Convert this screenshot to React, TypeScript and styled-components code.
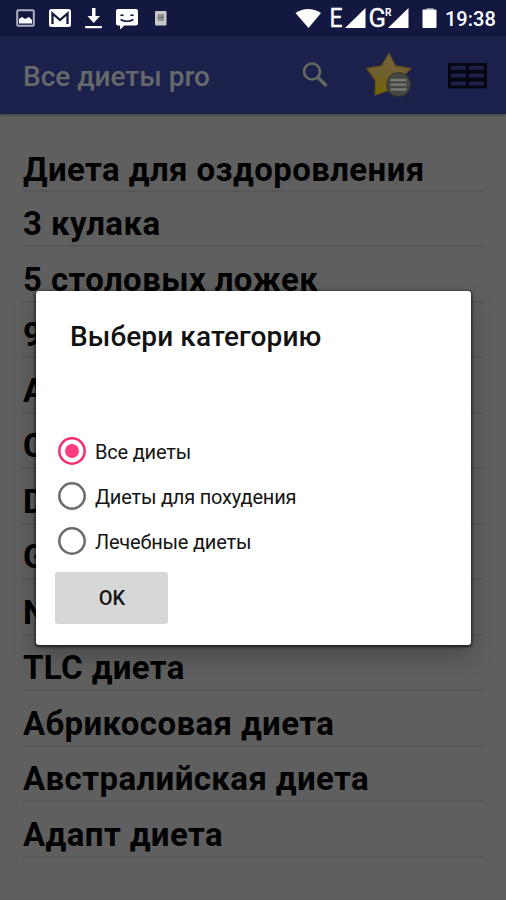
import React from 'react';
import styled, { createGlobalStyle } from 'styled-components';

const GlobalStyle = createGlobalStyle`
  * { box-sizing: border-box; }
  body { margin: 0; background: #5f5f5f; font-family: Roboto, "Liberation Sans", sans-serif; }
`;

const Screen = styled.div`
  position: relative;
  width: 506px;
  height: 900px;
  overflow: hidden;
  background: #5f5f5f;
`;

const StatusBar = styled.header`
  display: flex;
  justify-content: space-between;
  height: 36px;
  background: #131840;
  color: #fff;
`;

const StatusIcons = styled.svg`
  display: block;
  height: 36px;
`;

const StatusRight = styled.div`
  display: flex;
`;

const Clock = styled.span`
  width: 61px;
  font-size: 20px;
  font-weight: 500;
  line-height: 38px;
`;

const Toolbar = styled.div`
  display: flex;
  align-items: center;
  height: 78px;
  padding-left: 23px;
  background: #1b214b;
  box-shadow: 0 1px 3px rgba(0, 0, 0, 0.35);
`;

const AppTitle = styled.h1`
  flex: 1;
  margin: 0;
  padding-top: 3px;
  color: #66696b;
  font-size: 28px;
  font-weight: 500;
  line-height: 78px;
  white-space: nowrap;
`;

const ToolbarIcons = styled.svg`
  display: block;
  flex: none;
`;

const DietList = styled.ul`
  margin: 0;
  padding: 22px 22px 0 23px;
  list-style: none;
`;

const DietRow = styled.li<{ $shift?: number }>`
  height: 55.5px;
  border-bottom: 2px solid #575757;
  color: #020202;
  font-size: 33px;
  font-weight: 700;
  letter-spacing: 0.4px;
  line-height: 55.5px;
  padding-top: ${(p) => p.$shift ?? 0}px;
  white-space: nowrap;
`;

const Dialog = styled.section`
  position: absolute;
  left: 36px;
  top: 291px;
  width: 435px;
  height: 354px;
  padding: 26px 20px 0 19px;
  background: #fff;
  border-radius: 3px;
  box-shadow: 0 1px 3px 1px rgba(0, 0, 0, 0.65), 0 12px 24px rgba(0, 0, 0, 0.22);
`;

const DialogTitle = styled.h2`
  margin: 0 0 72px 15px;
  color: #111;
  font-size: 28px;
  font-weight: 500;
  letter-spacing: 0.1px;
  line-height: 39px;
  white-space: nowrap;
`;

const Option = styled.label`
  display: flex;
  align-items: center;
  height: 45px;
  padding-left: 3px;
  gap: 9px;
  color: #141414;
  font-size: 20px;
  white-space: nowrap;
`;

const RadioMark = styled.svg`
  display: block;
  width: 28px;
  height: 28px;
`;

const OptionText = styled.span`
  letter-spacing: -0.2px;
  padding-top: 2px;
`;

const OkButton = styled.button`
  display: block;
  width: 113px;
  height: 52px;
  margin: 9px 0 0;
  padding: 0 0 0 1px;
  border: 0;
  border-radius: 3px;
  background: #d6d8d7;
  color: #161616;
  font: 500 20px/52px Roboto, sans-serif;
`;

const diets = [
  'Диета для оздоровления', '3 кулака', '5 столовых ложек', '9', 'A', 'C', 'D', 'G', 'N',
  'TLC диета', 'Абрикосовая диета', 'Австралийская диета', 'Адапт диета',
];

const options = ['Все диеты', 'Диеты для похудения', 'Лечебные диеты'];

function Radio({ on }: { on: boolean }) {
  return (
    <RadioMark viewBox="0 0 28 28">
      <circle cx="14" cy="14" r="12.700" fill="none" stroke={on ? '#f52d73' : '#6b6b6b'} strokeWidth="2.500" />
      {on && <circle cx="14" cy="14" r="7" fill="#fa3b80" />}
    </RadioMark>
  );
}

function Notifications() {
  return (
    <StatusIcons width="180" viewBox="0 0 180 36">
      <rect x="17.2" y="10.2" width="16.6" height="15.6" rx="1" fill="none" stroke="#aeb0c2" strokeWidth="2" />
      <path d="M19 23.500v-4.500l3-2 3 2 4-2 3 3v3.500z" fill="#fff" />
      <rect x="49" y="9" width="22" height="18" rx="2.5" fill="#fff" />
      <path d="M52.5 24V13.5L60 20l7.500-6.500V24" fill="none" stroke="#131840" strokeWidth="2.3" />
      <path d="M92 8h3.500v8h4.500l-6.300 7-6.200-7H92z" fill="#fff" />
      <rect x="85" y="26" width="17" height="2.300" rx="1" fill="#fff" />
      <path d="M118 9h18a2 2 0 0 1 2 2v12.500a2 2 0 0 1-2 2h-11.500l-4.500 4v-4h-2a2 2 0 0 1-2-2V11a2 2 0 0 1 2-2z" fill="#fff" />
      <path d="M120.500 15.800q1.500-1.500 3 0M130.500 15.800q1.500-1.500 3 0M120.500 19.500q6.500 3.500 13 0" fill="none" stroke="#131840" strokeWidth="1.500" />
      <rect x="155" y="11" width="11.500" height="14.500" rx="1" fill="#c9c9cb" />
      <rect x="157.500" y="14" width="6.500" height="7" fill="#929292" />
      <path d="M158 17.500h6" stroke="#65656a" />
    </StatusIcons>
  );
}

function Signals() {
  return (
    <StatusIcons width="150" viewBox="295 0 150 36" fill="#fff" fontFamily="Roboto, sans-serif">
      <path d="M295.500 13Q308 5 321 13L308.500 28z" />
      <text x="329.500" y="27" fontSize="26" stroke="#fff" strokeWidth=".3" textLength="13" lengthAdjust="spacingAndGlyphs">E</text>
      <path d="M365.500 8v20H345z" />
      <text x="368.500" y="27" fontSize="26" stroke="#fff" strokeWidth=".3" textLength="17.500" lengthAdjust="spacingAndGlyphs">G</text>
      <path d="M408.500 8v20H388z" />
      <text x="385" y="16" fontSize="10.500" fontWeight="700" stroke="#131840" strokeWidth="2" paintOrder="stroke" textLength="6.500" lengthAdjust="spacingAndGlyphs">R</text>
      <rect x="426.500" y="8" width="7" height="2" fill="#85899f" />
      <rect x="422.500" y="9.500" width="14" height="18.500" rx="1" />
    </StatusIcons>
  );
}

function Actions() {
  return (
    <ToolbarIcons width="216" height="78" viewBox="290 36 216 78">
      <defs>
        <linearGradient id="gold" x1="0" y1="0" x2="0" y2="1">
          <stop offset="0" stopColor="#746344" />
          <stop offset=".5" stopColor="#70602b" />
          <stop offset="1" stopColor="#776800" />
        </linearGradient>
      </defs>
      <circle cx="312" cy="71.500" r="8" fill="none" stroke="#64675f" strokeWidth="2.700" />
      <path d="M317.500 77l9 9" stroke="#64675f" strokeWidth="3.300" />
      <path d="M389 53.500l6.500 12.500 15 2.500-10.500 11 1.500 15-13-4-13.500 4.500.5-14.500-8.500-12 14.500-2.500z" fill="url(#gold)" stroke="#66501d" strokeWidth="1.300" strokeLinejoin="round" />
      <circle cx="398.500" cy="84.500" r="12" fill="#434641" stroke="#32362f" strokeWidth="1" />
      <path d="M390.500 80h16M390.500 84.700h16M390.500 89.500h16" stroke="#777974" strokeWidth="2.300" />
      <rect x="448" y="63" width="39" height="25.500" fill="#05060f" />
      <path d="M451 67.700h15M469 67.700h15M451 75.500h15M469 75.500h15M451 83.500h15M469 83.500h15" stroke="#1b214b" strokeWidth="4" />
    </ToolbarIcons>
  );
}

export default function App() {
  return (
    <Screen>
      <GlobalStyle />
      <StatusBar>
        <Notifications />
        <StatusRight>
          <Signals />
          <Clock>19:38</Clock>
        </StatusRight>
      </StatusBar>
      <Toolbar>
        <AppTitle>Все диеты pro</AppTitle>
        <Actions />
      </Toolbar>
      <DietList>
        {diets.map((name, i) => (
          <DietRow key={name} $shift={i === 0 ? 6 : 4.5}>{name}</DietRow>
        ))}
      </DietList>
      <Dialog role="dialog">
        <DialogTitle>Выбери категорию</DialogTitle>
        {options.map((label, i) => (
          <Option key={label}>
            <Radio on={i === 0} />
            <OptionText>{label}</OptionText>
          </Option>
        ))}
        <OkButton>OK</OkButton>
      </Dialog>
    </Screen>
  );
}
